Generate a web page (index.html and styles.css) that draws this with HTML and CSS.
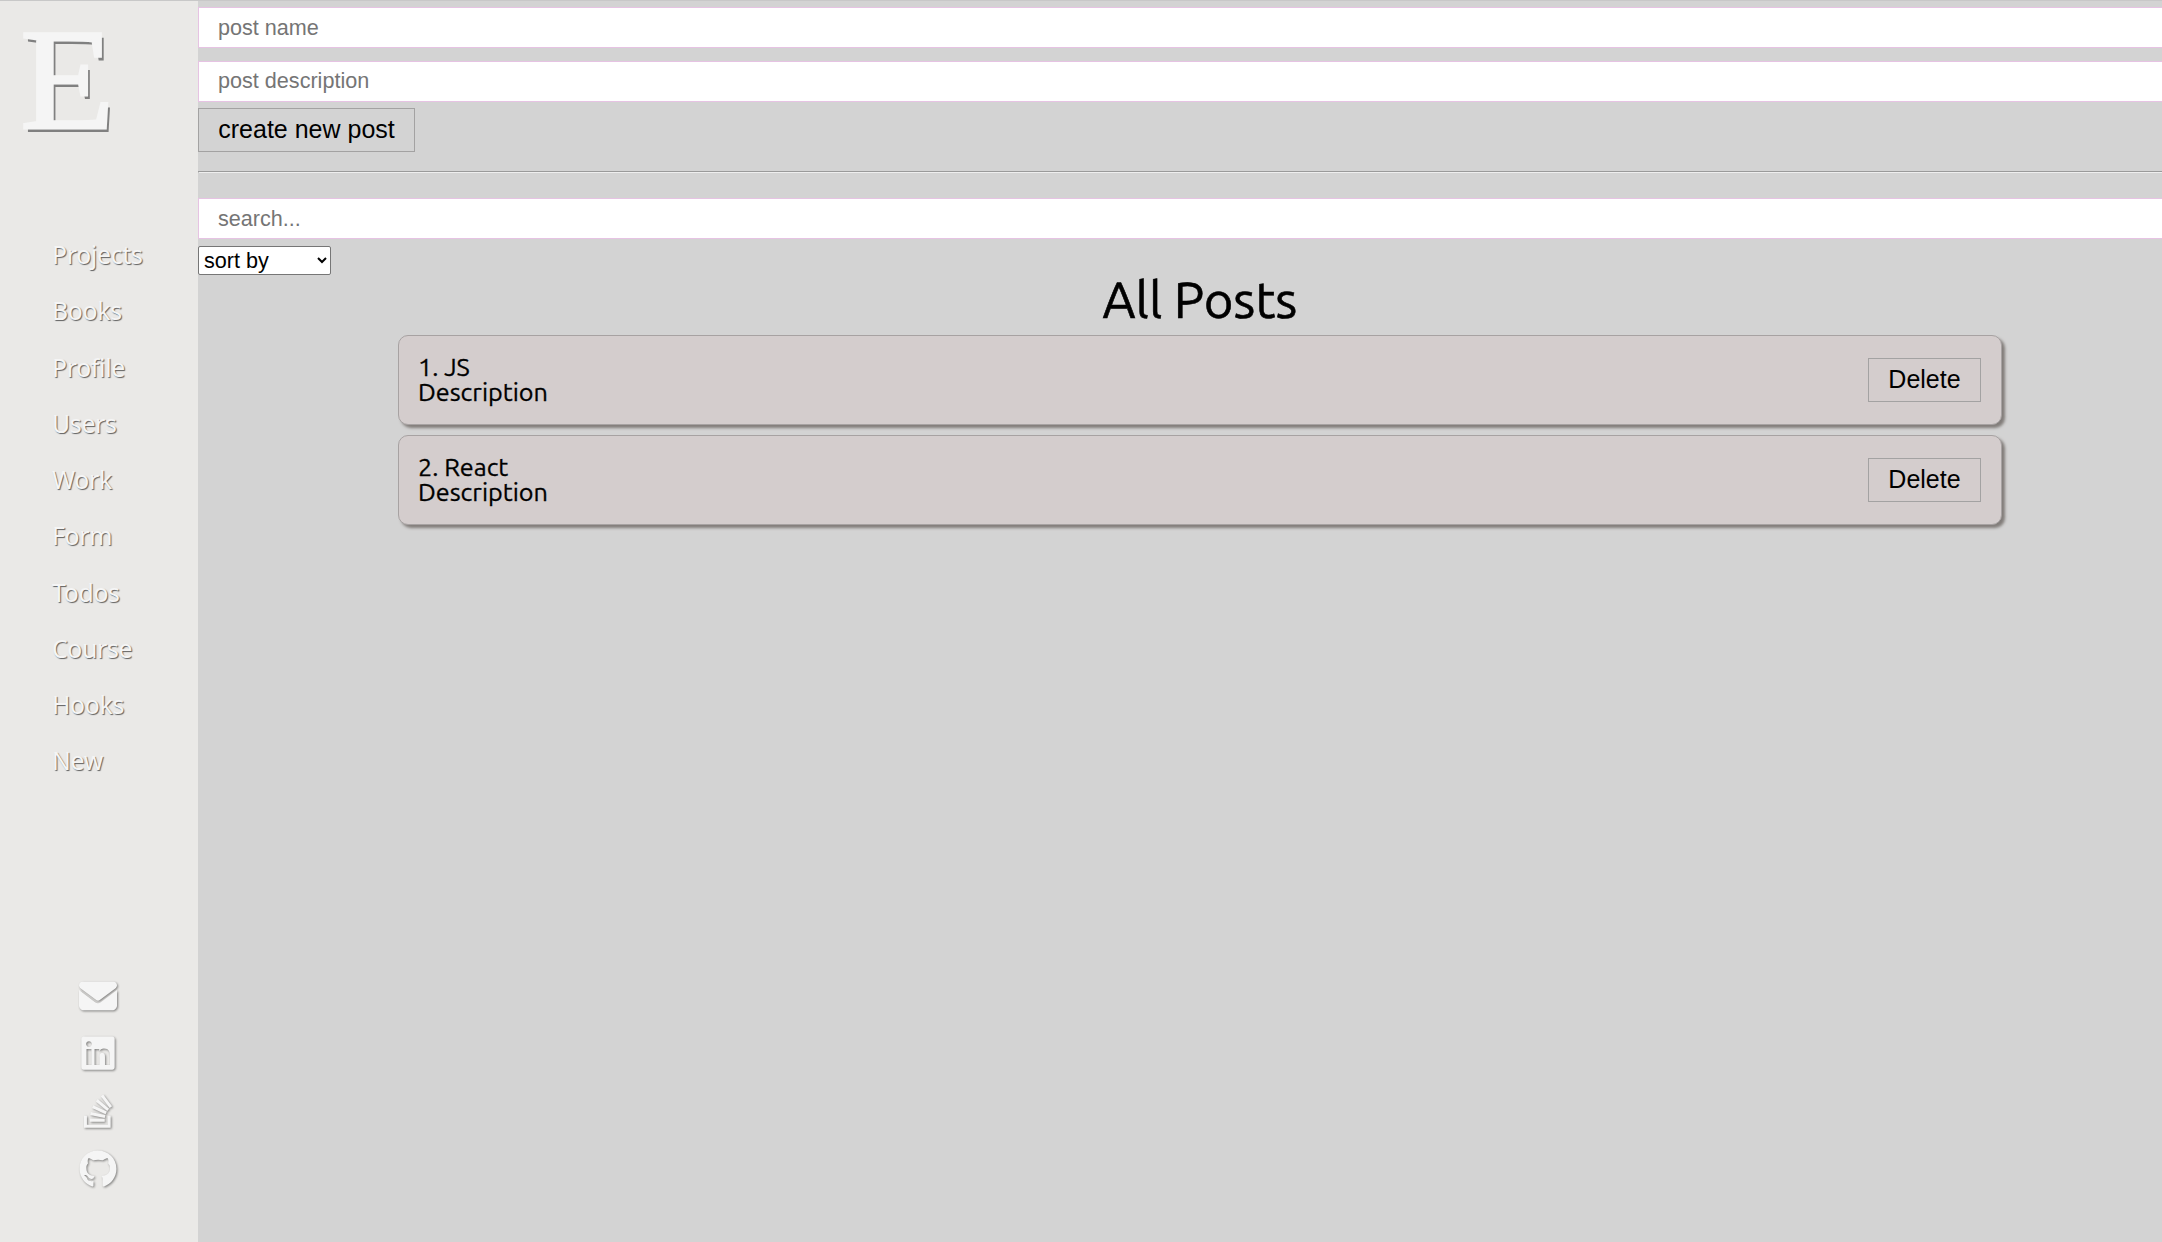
FILE: index.html
```html
<!DOCTYPE html>
<html lang="en">
<head>
<meta charset="utf-8">
<title>All Posts</title>
<link rel="stylesheet" href="styles.css">
</head>
<body>
<div class="app">
  <aside class="sidebar">
    <div class="logo">E</div>
    <nav class="nav">
      <a>Projects</a><a>Books</a><a>Profile</a><a>Users</a><a>Work</a><a>Form</a><a>Todos</a><a>Course</a><a>Hooks</a><a>New</a>
    </nav>
    <div class="social">
      <svg viewBox="0 0 512 512"><path d="M48 64C21.5 64 0 85.5 0 112c0 15.1 7.1 29.3 19.2 38.4L236.8 313.6c11.4 8.5 27 8.5 38.4 0L492.8 150.4c12.1-9.1 19.2-23.3 19.2-38.4c0-26.5-21.5-48-48-48H48zM0 176V384c0 35.3 28.7 64 64 64H448c35.3 0 64-28.7 64-64V176L294.4 339.2c-22.8 17.1-54 17.1-76.8 0L0 176z"/></svg>
      <svg viewBox="-32 0 512 512"><path d="M416 32H31.9C14.3 32 0 46.5 0 64.3v383.4C0 465.5 14.3 480 31.9 480H416c17.6 0 32-14.5 32-32.3V64.3c0-17.8-14.4-32.3-32-32.3zM135.4 416H69V202.2h66.5V416zm-33.2-243c-21.3 0-38.5-17.3-38.5-38.5S80.9 96 102.2 96c21.2 0 38.5 17.3 38.5 38.5 0 21.3-17.2 38.5-38.5 38.5zm282.1 243h-66.4V312c0-24.8-.5-56.7-34.5-56.7-34.6 0-39.9 27-39.9 54.9V416h-66.4V202.2h63.7v29.2h.9c8.9-16.8 30.6-34.5 62.9-34.5 67.2 0 79.7 44.3 79.7 101.9V416z"/></svg>
      <svg viewBox="-64 0 512 512"><path d="M290.7 311L95 269.7 86.8 309l195.7 41zm51-87L188.2 95.7l-25.5 30.8 153.5 128.3zm-31.2 39.7L129.2 179l-16.7 36.5L293.7 300zM262 32l-32 24 119.3 160.3 32-24zm20.5 328h-200v39.7h200zm39.7 80H42.7V320h-40v160h359.5V320h-40z"/></svg>
      <svg viewBox="-8 0 512 512"><path d="M244.8 8C106.1 8 0 113.3 0 252c0 110.9 69.8 205.8 169.5 239.2 12.8 2.3 17.3-5.6 17.3-12.1 0-6.2-.3-40.4-.3-61.4 0 0-70 15-84.7-29.8 0 0-11.4-29.1-27.8-36.6 0 0-22.9-15.7 1.6-15.4 0 0 24.9 2 38.6 25.8 21.9 38.6 58.6 27.5 72.9 20.9 2.3-16 8.8-27.1 16-33.7-55.9-6.2-112.3-14.3-112.3-110.5 0-27.5 7.6-41.3 23.6-58.9-2.6-6.5-11.1-33.3 2.6-67.9 20.9-6.5 69 27 69 27 20-5.6 41.5-8.5 62.8-8.5s42.8 2.9 62.8 8.5c0 0 48.1-33.6 69-27 13.7 34.7 5.2 61.4 2.6 67.9 16 17.7 25.8 31.5 25.8 58.9 0 96.5-58.9 104.2-114.8 110.5 9.2 7.9 17 22.9 17 46.4 0 33.7-.3 75.4-.3 83.6 0 6.5 4.6 14.4 17.3 12.1C428.2 457.8 496 362.9 496 252 496 113.3 383.5 8 244.8 8z"/></svg>
    </div>
  </aside>
  <main class="content">
    <form class="create">
      <input class="field" placeholder="post name">
      <input class="field field-desc" placeholder="post description">
      <button class="btn btn-create" type="button">create new post</button>
    </form>
    <hr class="divider">
    <input class="field" placeholder="search...">
    <select class="sort"><option>sort by</option></select>
    <h1 class="title">All Posts</h1>
    <section class="posts">
      <article class="post">
        <div class="post-text"><div class="post-name">1. JS</div><div>Description</div></div>
        <button class="btn btn-delete" type="button">Delete</button>
      </article>
      <article class="post">
        <div class="post-text"><div class="post-name">2. React</div><div>Description</div></div>
        <button class="btn btn-delete" type="button">Delete</button>
      </article>
    </section>
  </main>
</div>
</body>
</html>
```
FILE: styles.css
```css
* { box-sizing: border-box; margin: 0; padding: 0; }
body { height: 1242px; overflow: hidden; background: #d3d3d3; color: #000; font-family: Ubuntu, "Noto Sans", sans-serif; }
.app { display: flex; height: 1242px; border-top: 1px solid #c8c8c8; }
.sidebar { flex: none; width: 198px; display: flex; flex-direction: column; background: #eae9e7; }
.logo { height: 225px; padding: 7px 0 0 19px; font: 144px/1 "Liberation Serif", serif; color: #f5f5f5; -webkit-text-stroke: 2.8px #f5f5f5; text-shadow: 3px 4px 0 #808080; transform: scaleX(1.07); transform-origin: 0 0; }
.nav { display: flex; flex-direction: column; padding-left: 52px; }
.nav a { height: 56.25px; line-height: 57.6px; font-family: "Noto Sans", sans-serif; font-size: 24.8px; letter-spacing: -0.3px; color: #f5f5f5; text-shadow: 1px 1px 1px #606060; }
.social { display: flex; flex-direction: column; align-items: center; gap: 19.7px; margin-top: 188px; padding-right: 2px; }
.social svg { width: 38px; height: 38px; fill: #f5f5f5; overflow: visible; filter: drop-shadow(1px 1px 1px rgba(0, 0, 0, .45)); }
.content { flex: none; width: 2004px; padding-top: 6px; }
.create { display: block; }
.field { display: block; width: 100%; height: 41px; margin-bottom: 13px; padding: 0 19px; border: 1px solid #e6c3e3; background: #fff; font: 21.6px "Liberation Sans", sans-serif; }
.field-desc { padding-bottom: 2px; }
.field::placeholder { color: #757575; opacity: 1; }
.field + .btn { margin-top: -7px; }
.field + .sort { margin-top: -6px; }
.btn { display: block; height: 44px; padding-bottom: 2px; border: 1px solid #a3a2a2; background: transparent; color: #000; font: 25px "Liberation Sans", sans-serif; text-align: center; }
.btn-create { width: 217px; }
.divider { height: 2px; margin: 19px 0 25px; border: 1px solid; border-color: #9a9a9a #eee #eee #9a9a9a; }
.sort { display: block; width: 133px; height: 29px; padding: 0 1px; border: 1px solid #767676; border-radius: 2px; background: #fff; color: #000; font: 21.6px "Liberation Sans", sans-serif; }
.title { height: 60px; line-height: 49px; text-align: center; font-size: 50.8px; font-weight: 400; -webkit-text-stroke: .6px #000; }
.posts { display: flex; flex-direction: column; gap: 10px; padding: 0 200px; }
.post { display: flex; align-items: center; justify-content: space-between; height: 90px; padding: 0 20px 0 19px; border: 1px solid #a7a2a2; border-radius: 10px; background: #d4cdcd; box-shadow: 3px 3px 3px #827d7a; }
.post-text { font-size: 25.2px; line-height: 25px; -webkit-text-stroke: .3px #000; }
.btn-delete { width: 113px; }
```
